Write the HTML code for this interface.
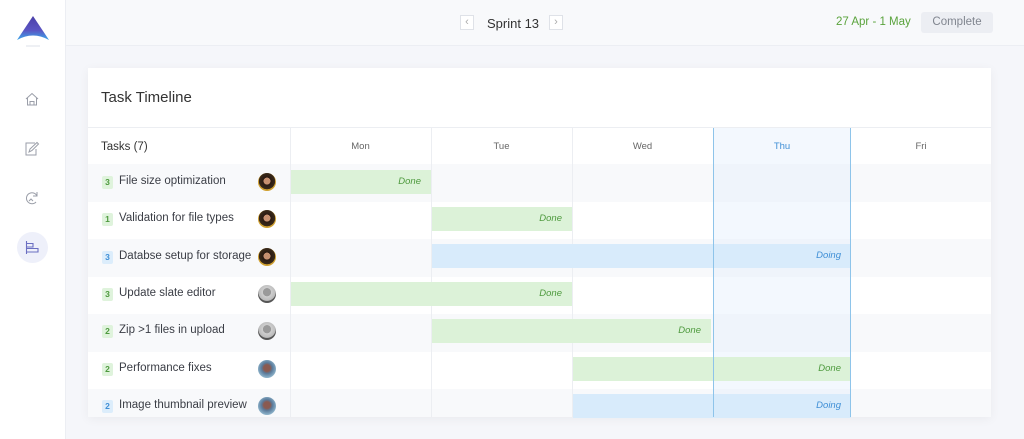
<!DOCTYPE html>
<html><head><meta charset="utf-8"><style>
*{margin:0;padding:0;box-sizing:border-box}
body{width:1024px;height:439px;overflow:hidden;background:#f5f6fa;font-family:"Liberation Sans",sans-serif;position:relative;color:#3a3d45}
.abs{position:absolute}
.side{left:0;top:0;width:66px;height:439px;background:#fff;border-right:1px solid #eceef3}
.top{left:66px;top:0;width:958px;height:46px;background:#f8f9fb;border-bottom:1px solid #eceef3}
.card{left:88px;top:68px;width:903px;height:349px;background:#fff;box-shadow:0 2px 10px rgba(0,0,0,.05)}
.row{position:absolute;left:0;width:903px;height:37.5px}
.stripe{background:#f8f9fb}
.tn{position:absolute;font-size:11.5px;color:#3a3d45}
.badge{position:absolute;width:11px;height:13px;font-size:8.5px;line-height:13px;text-align:center;border-radius:2px;font-weight:bold}
.g{background:#dff3dc;color:#4e9a3e}
.b{background:#dcedfb;color:#3f8fd6}
.av{position:absolute;width:18px;height:18px;border-radius:50%}
.bar{position:absolute;height:24px;font-size:9.5px;font-style:italic;text-align:right;padding-right:10px;line-height:24px}
.bg{background:#dcf2d8;color:#4e9a3e}
.bb{background:#d8ebfb;color:#3f8fd6}
.day{position:absolute;top:73px;font-size:9.5px;color:#666;text-align:center}
.vl{position:absolute;top:59px;width:1px;height:290px;background:#eceef2}
</style></head><body>
<div class="abs side">
<svg class="abs" style="left:16px;top:15px" width="34" height="34" viewBox="0 0 34 34"><defs><linearGradient id="lg" x1="0" y1="0" x2="0" y2="1"><stop offset="0" stop-color="#4a3fa8"/><stop offset="0.6" stop-color="#5b55c4"/><stop offset="1" stop-color="#3aa8ea"/></linearGradient></defs><path d="M17 1 L33 25 Q17 16 1 25 Z" fill="url(#lg)"/><rect x="10" y="30" width="14" height="2" fill="#eef0f4"/></svg>
<svg class="abs" style="left:25px;top:92px" width="14" height="14" viewBox="0 0 14 14" fill="none" stroke="#9a9ea8" stroke-width="1"><path d="M1 7 L7 1.5 L13 7 M2.5 6 V13 H11.5 V6 M5 13 V9.5 H9 V13"/></svg>
<svg class="abs" style="left:24px;top:141px" width="16" height="16" viewBox="0 0 16 16" fill="none" stroke="#9a9ea8" stroke-width="1"><path d="M11 2 H2 V14 H12 V8 M5 11 L6 8 L13 1.5 L14.5 3 L8 9.5 Z"/></svg>
<svg class="abs" style="left:24px;top:190px" width="16" height="16" viewBox="0 0 16 16" fill="none" stroke="#9a9ea8" stroke-width="1"><path d="M13 6 A5.5 5.5 0 1 0 12 12 M13 2 V6 H9 M5 11 L7 9 L9 11"/></svg>
<div class="abs" style="left:17px;top:232px;width:31px;height:31px;border-radius:50%;background:#eef0fa"></div>
<svg class="abs" style="left:25px;top:240px" width="15" height="15" viewBox="0 0 15 15" fill="none" stroke="#6b6fc2" stroke-width="1.1"><path d="M1.5 1 V14 M1.5 3.5 H8 V7 H1.5 M1.5 8.5 H13 V12 H1.5"/></svg>
</div>
<div class="abs top">
<div class="abs" style="left:394px;top:15px;width:14px;height:15px;border:1px solid #dfe2e8;background:#fff;font-size:11px;color:#aaa;text-align:center;line-height:13px">&#8249;</div>
<div class="abs" style="left:421px;top:16px;font-size:13px;color:#333">Sprint 13</div>
<div class="abs" style="left:483px;top:15px;width:14px;height:15px;border:1px solid #dfe2e8;background:#fff;font-size:11px;color:#aaa;text-align:center;line-height:13px">&#8250;</div>
<div class="abs" style="left:770px;top:16px;font-size:11.5px;color:#5aa33c">27 Apr - 1 May</div>
<div class="abs" style="left:855px;top:12px;width:72px;height:21px;background:#eceef3;border-radius:3px;font-size:11.5px;color:#80858f;text-align:center;line-height:21px">Complete</div>
</div>
<div class="abs card">
<div class="abs" style="left:13px;top:21px;font-size:15px;color:#333">Task Timeline</div>
<div class="abs" style="left:0;top:59px;width:903px;height:1px;background:#eceef2"></div>
<div class="abs" style="left:13px;top:73px;font-size:11.5px;color:#333">Tasks (7)</div>
<div class="row stripe" style="top:96px"></div>
<div class="row" style="top:133.5px"></div>
<div class="row stripe" style="top:171px"></div>
<div class="row" style="top:208.5px"></div>
<div class="row stripe" style="top:246px"></div>
<div class="row" style="top:283.5px"></div>
<div class="row stripe" style="top:321px;height:28px"></div>
<div class="abs" style="left:625px;top:60px;width:138px;height:289px;background:rgba(225,238,252,.4)"></div>
<div class="vl" style="left:202px"></div><div class="vl" style="left:343px"></div><div class="vl" style="left:484px"></div>
<div class="day" style="left:202px;width:141px">Mon</div>
<div class="day" style="left:343px;width:141px">Tue</div>
<div class="day" style="left:484px;width:141px">Wed</div>
<div class="day" style="left:625px;width:138px;color:#3f8fd6">Thu</div>
<div class="day" style="left:763px;width:140px">Fri</div>

<div class="badge g" style="left:14px;top:108px">3</div><div class="tn" style="left:31px;top:107px">File size optimization</div>
<div class="badge g" style="left:14px;top:145px">1</div><div class="tn" style="left:31px;top:144px">Validation for file types</div>
<div class="badge b" style="left:14px;top:183px">3</div><div class="tn" style="left:31px;top:182px">Databse setup for storage</div>
<div class="badge g" style="left:14px;top:220px">3</div><div class="tn" style="left:31px;top:219px">Update slate editor</div>
<div class="badge g" style="left:14px;top:257px">2</div><div class="tn" style="left:31px;top:256px">Zip &gt;1 files in upload</div>
<div class="badge g" style="left:14px;top:295px">2</div><div class="tn" style="left:31px;top:294px">Performance fixes</div>
<div class="badge b" style="left:14px;top:332px">2</div><div class="tn" style="left:31px;top:331px">Image thumbnail preview</div>

<div class="av" style="left:170px;top:105px;background:radial-gradient(circle at 50% 45%,#c79070 25%,#2a1a12 27%,#3a2a1a 60%,#d0a030 62%)"></div>
<div class="av" style="left:170px;top:142px;background:radial-gradient(circle at 50% 45%,#c79070 25%,#2a1a12 27%,#3a2a1a 60%,#d0a030 62%)"></div>
<div class="av" style="left:170px;top:180px;background:radial-gradient(circle at 50% 45%,#c79070 25%,#2a1a12 27%,#3a2a1a 60%,#d0a030 62%)"></div>
<div class="av" style="left:170px;top:217px;background:radial-gradient(circle at 50% 40%,#9a9a9a 28%,#cfcfcf 30%,#bbb 60%,#555 64%)"></div>
<div class="av" style="left:170px;top:254px;background:radial-gradient(circle at 50% 40%,#9a9a9a 28%,#cfcfcf 30%,#bbb 60%,#555 64%)"></div>
<div class="av" style="left:170px;top:292px;background:radial-gradient(circle at 50% 45%,#8a5a50 25%,#5a7a9a 40%,#8ab0c8 70%)"></div>
<div class="av" style="left:170px;top:329px;background:radial-gradient(circle at 50% 45%,#8a5a50 25%,#5a7a9a 40%,#8ab0c8 70%)"></div>

<div class="bar bg" style="left:203px;top:102px;width:140px">Done</div>
<div class="bar bg" style="left:344px;top:139px;width:140px">Done</div>
<div class="bar bb" style="left:344px;top:176px;width:419px">Doing</div>
<div class="bar bg" style="left:203px;top:214px;width:281px">Done</div>
<div class="bar bg" style="left:344px;top:251px;width:279px">Done</div>
<div class="bar bg" style="left:485px;top:289px;width:278px">Done</div>
<div class="bar bb" style="left:485px;top:326px;width:278px">Doing</div>
<div class="abs" style="left:625px;top:60px;width:1px;height:289px;background:#8ec4ea"></div>
<div class="abs" style="left:762px;top:60px;width:1px;height:289px;background:#8ec4ea"></div>
</div>
</body></html>
